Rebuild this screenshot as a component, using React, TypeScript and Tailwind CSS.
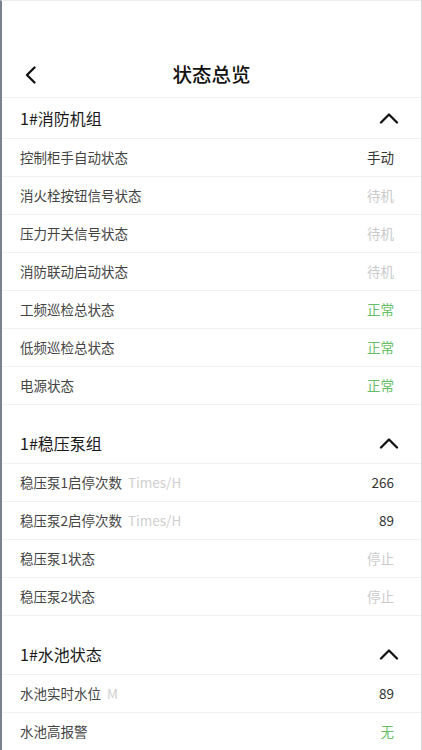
import React from 'react';

type Row = {
  label: string;
  unit?: string;
  value: string;
  tone: 'dark' | 'muted' | 'green';
};

const sections: { title: string; rows: Row[] }[] = [
  {
    title: '1#消防机组',
    rows: [
      { label: '控制柜手自动状态', value: '手动', tone: 'dark' },
      { label: '消火栓按钮信号状态', value: '待机', tone: 'muted' },
      { label: '压力开关信号状态', value: '待机', tone: 'muted' },
      { label: '消防联动启动状态', value: '待机', tone: 'muted' },
      { label: '工频巡检总状态', value: '正常', tone: 'green' },
      { label: '低频巡检总状态', value: '正常', tone: 'green' },
      { label: '电源状态', value: '正常', tone: 'green' },
    ],
  },
  {
    title: '1#稳压泵组',
    rows: [
      { label: '稳压泵1启停次数', unit: 'Times/H', value: '266', tone: 'dark' },
      { label: '稳压泵2启停次数', unit: 'Times/H', value: '89', tone: 'dark' },
      { label: '稳压泵1状态', value: '停止', tone: 'muted' },
      { label: '稳压泵2状态', value: '停止', tone: 'muted' },
    ],
  },
  {
    title: '1#水池状态',
    rows: [
      { label: '水池实时水位', unit: 'M', value: '89', tone: 'dark' },
      { label: '水池高报警', value: '无', tone: 'green' },
    ],
  },
];

const toneClass = {
  dark: 'text-[#333333]',
  muted: 'text-[#cacaca]',
  green: 'text-[#66bf66]',
};

function ChevronUp() {
  return (
    <svg width="20" height="12" viewBox="0 0 20 12" fill="none">
      <path d="M2 10.5 L10 2.5 L18 10.5" stroke="#111" strokeWidth="2.3" strokeLinecap="round" strokeLinejoin="round" />
    </svg>
  );
}

export default function App() {
  return (
    <div
      className="min-h-[750px] w-[422px] bg-white border-l-2 border-l-[#7a838d] border-r border-r-[#d6d6d6] border-t border-t-[#ececec] overflow-hidden"
      style={{ fontFamily: '"Noto Sans CJK SC", "Noto Sans", sans-serif' }}
    >
      {/* status bar spacer */}
      <div className="h-[49px]" />

      {/* nav bar */}
      <div className="relative h-[48px] flex items-center justify-center border-b border-[#f0f0f0]">
        <button className="absolute left-[21px] top-[16px] p-0">
          <svg width="16" height="18" viewBox="0 0 16 18" fill="none">
            <path d="M11.5 1.5 L4 9 L11.5 16.5" stroke="#111" strokeWidth="2.3" strokeLinecap="round" strokeLinejoin="round" />
          </svg>
        </button>
        <h1 className="text-[19.5px] font-medium text-[#111]">状态总览</h1>
      </div>

      {sections.map((section, si) => (
        <div key={section.title} className={si > 0 ? 'mt-[18px]' : ''}>
          <div className="h-[41px] flex items-center justify-between pl-[18px] pr-[22px] border-b border-[#f2f2f2]">
            <span className="text-[16px] text-[#1a1a1a]">{section.title}</span>
            <ChevronUp />
          </div>
          {section.rows.map(row => (
            <div
              key={row.label}
              className="h-[38px] flex items-center justify-between pl-[18px] pr-[27px] border-b border-[#f2f2f2]"
            >
              <span className="text-[13.5px] text-[#444]">
                {row.label}
                {row.unit && <span className="ml-[6px] text-[#cfcfcf]">{row.unit}</span>}
              </span>
              <span className={`text-[13.5px] ${toneClass[row.tone]}`}>{row.value}</span>
            </div>
          ))}
        </div>
      ))}
    </div>
  );
}
